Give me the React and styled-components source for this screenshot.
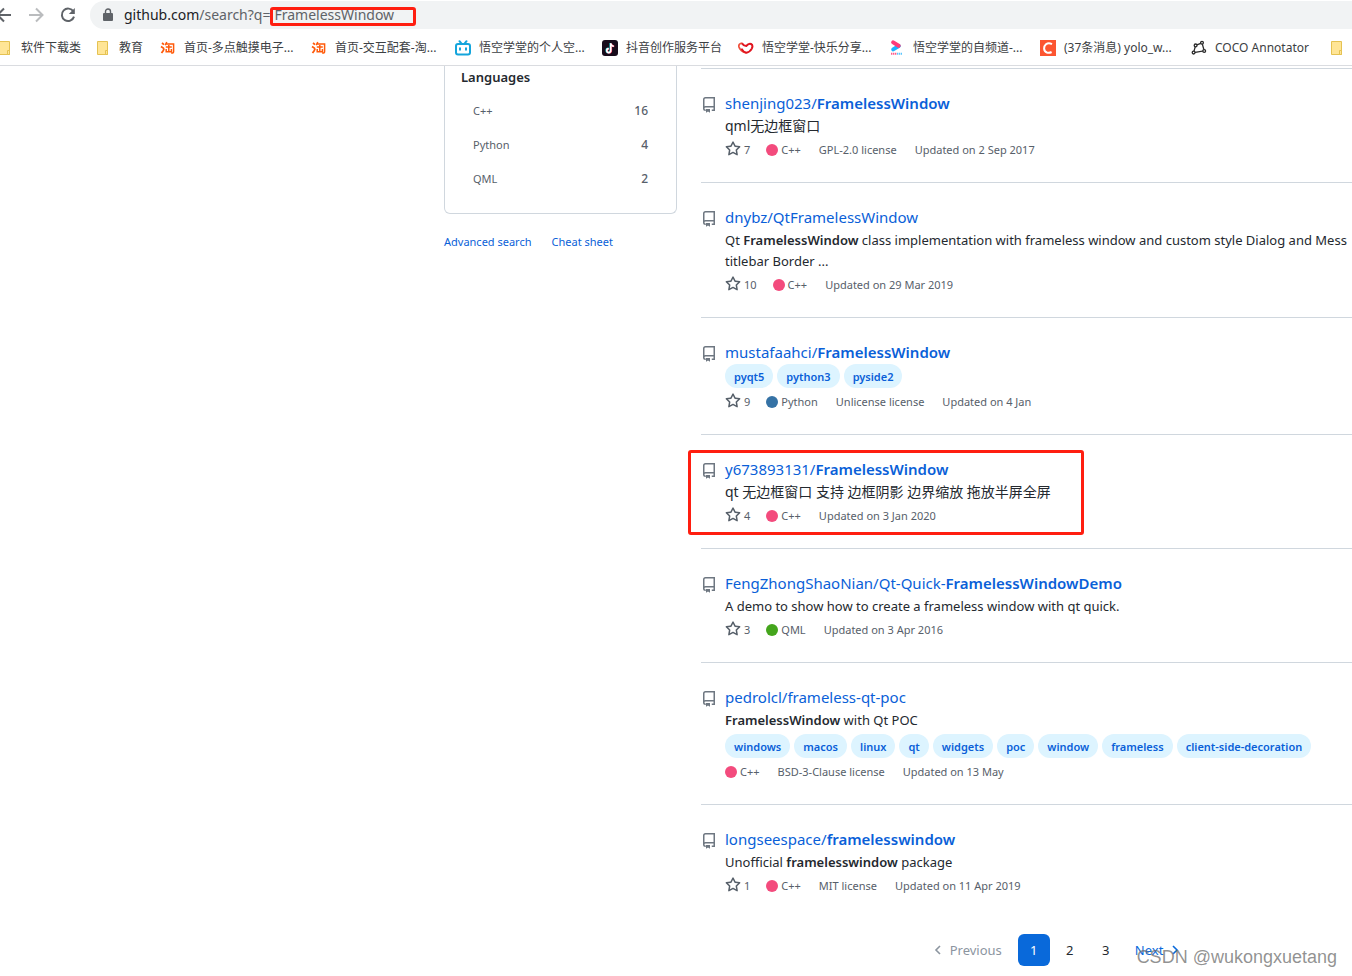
import React from "react";
import styled, { createGlobalStyle } from "styled-components";

const GlobalStyle = createGlobalStyle`
  * {
    box-sizing: border-box;
  }
  body {
    margin: 0;
    overflow: hidden;
    background: #fff;
    color: #24292f;
    font-family: "Noto Sans", "Noto Sans CJK SC", sans-serif;
    font-size: 13px;
    line-height: 21px;
  }
  a {
    color: #0a5fd8;
    text-decoration: none;
  }
`;

const BOOKMARKS = [
  { icon: "folder", label: "软件下载类", width: 98 },
  { icon: "folder", label: "教育", width: 65 },
  { icon: "taobao", label: "首页-多点触摸电子...", width: 151 },
  { icon: "taobao", label: "首页-交互配套-淘...", width: 144 },
  { icon: "bilibili", label: "悟空学堂的个人空...", width: 147 },
  { icon: "douyin", label: "抖音创作服务平台", width: 136 },
  { icon: "xigua", label: "悟空学堂-快乐分享...", width: 151 },
  { icon: "youku", label: "悟空学堂的自频道-...", width: 151 },
  { icon: "csdn", label: "(37条消息) yolo_w...", width: 151 },
  { icon: "coco", label: "COCO Annotator", width: 138 },
  { icon: "folder", label: "", width: 24 },
];

const LANGUAGES = [
  { name: "C++", count: 16 },
  { name: "Python", count: 4 },
  { name: "QML", count: 2 },
];

const COLORS = { "C++": "#f34b7d", Python: "#3572a5", QML: "#44a51c" };

const REPOS = [
  {
    owner: "shenjing023/",
    match: "FramelessWindow",
    description: "qml无边框窗口",
    chinese: true,
    stars: 7,
    language: "C++",
    license: "GPL-2.0 license",
    updated: "2 Sep 2017",
  },
  {
    owner: "dnybz/QtFramelessWindow",
    description: (
      <>
        Qt <b>FramelessWindow</b> class implementation with frameless window and custom style Dialog and Mess
        <br />
        titlebar Border ...
      </>
    ),
    stars: 10,
    language: "C++",
    updated: "29 Mar 2019",
  },
  {
    owner: "mustafaahci/",
    match: "FramelessWindow",
    topics: ["pyqt5", "python3", "pyside2"],
    stars: 9,
    language: "Python",
    license: "Unlicense license",
    updated: "4 Jan",
  },
  {
    owner: "y673893131/",
    match: "FramelessWindow",
    description: "qt 无边框窗口 支持 边框阴影 边界缩放 拖放半屏全屏",
    chinese: true,
    stars: 4,
    language: "C++",
    updated: "3 Jan 2020",
    marked: true,
  },
  {
    owner: "FengZhongShaoNian/Qt-Quick-",
    match: "FramelessWindowDemo",
    description: "A demo to show how to create a frameless window with qt quick.",
    stars: 3,
    language: "QML",
    updated: "3 Apr 2016",
  },
  {
    owner: "pedrolcl/frameless-qt-poc",
    description: (
      <>
        <b>FramelessWindow</b> with Qt POC
      </>
    ),
    topics: ["windows", "macos", "linux", "qt", "widgets", "poc", "window", "frameless", "client-side-decoration"],
    language: "C++",
    license: "BSD-3-Clause license",
    updated: "13 May",
  },
  {
    owner: "longseespace/",
    match: "framelesswindow",
    description: (
      <>
        Unofficial <b>framelesswindow</b> package
      </>
    ),
    stars: 1,
    language: "C++",
    license: "MIT license",
    updated: "11 Apr 2019",
  },
];

function BookmarkIcon({ name }) {
  switch (name) {
    case "folder":
      return (
        <svg width="16" height="16" viewBox="0 0 16 16">
          <path d="M2.5 1.5h10v13h-10z" fill="#ffe596" stroke="#e5c252" />
          <path d="M10.5 10.5h2v4h-2z" fill="#ffe596" stroke="#e5c252" />
        </svg>
      );
    case "taobao":
      return (
        <svg width="16" height="16" viewBox="0 0 16 16" fill="none" stroke="#ff5a0a" strokeWidth="1.8">
          <path d="M2 3l2 1.6M1 6.5l2.4 1.6q1 1-.2 2.6L1.5 13" />
          <path d="M6.8 2L5.2 5.2M6 4h7.6v7.4q0 2-2.4 1.6M5.8 7h6M8.8 5v6.5M6.2 9v2.7h5.2V9" strokeWidth="1.5" />
        </svg>
      );
    case "bilibili":
      return (
        <svg width="16" height="16" viewBox="0 0 16 16" fill="none" stroke="#14a5dc" strokeWidth="2" strokeLinecap="round">
          <rect x="1" y="4" width="14" height="10.5" rx="2" />
          <path d="M4.5 1.2L6.5 3.6M11.5 1.2L9.5 3.6M5 8.3v1.4M11 8.3v1.4" />
        </svg>
      );
    case "douyin":
      return (
        <svg width="16" height="16" viewBox="0 0 16 16" fill="none" strokeWidth="1.6">
          <rect width="16" height="16" rx="3" fill="#170b1a" />
          <path d="M8.3 3v7.4a2 2 0 1 1-2-2M8.3 3.4q.6 2.4 3 2.6" stroke="#25f4ee" />
          <path d="M9.3 3.4v7.4a2 2 0 1 1-2-2M9.3 3.8q.6 2.4 3 2.6" stroke="#fe2c55" />
          <path d="M8.8 3.2v7.4a2 2 0 1 1-2-2M8.8 3.6q.6 2.4 3 2.6" stroke="#fff" />
        </svg>
      );
    case "xigua":
      return (
        <svg width="16" height="16" viewBox="0 0 16 16" fill="none">
          <path d="M4.4 3.2Q.2 3.4 1 7q1.4 4.4 7 6" stroke="#f0503c" strokeWidth="1.8" />
          <path d="M4 3.4q1.8 2.6 4.2 2.6Q10.6 3.2 13 4q2.4 1.2.8 4.6-1.8 3.4-5.4 4.2Q5 11.8 3.4 8.6" stroke="#e0141e" strokeWidth="2" />
        </svg>
      );
    case "youku":
      return (
        <svg width="16" height="16" viewBox="0 0 16 16" fill="none">
          <path d="M9.8 6L4.2 9.4" stroke="#1fb0ff" strokeWidth="4" strokeLinecap="round" />
          <path d="M4.2 2.4l5.4 3.4" stroke="#ff3a78" strokeWidth="4" strokeLinecap="round" />
          <path d="M2 13.8h6" stroke="#ff5c8c" strokeWidth="2" strokeDasharray="1.4 .6" />
          <path d="M8 13.8h5" stroke="#59c6ff" strokeWidth="2" strokeDasharray="1.4 .6" />
        </svg>
      );
    case "csdn":
      return (
        <svg width="16" height="16" viewBox="0 0 16 16" fill="none">
          <path d="M0 0h16v16H0z" fill="#fc5531" />
          <path d="M12 4.2Q8.6 2.4 6 4.3 4 6 4.1 8.6q.3 3 2.8 3.9 2.4.7 4.7-.5" stroke="#fff" strokeWidth="2" />
        </svg>
      );
    default:
      return (
        <svg width="16" height="16" viewBox="0 0 16 16" fill="#fff" stroke="#2b2b2b" strokeWidth="1.3">
          <path d="M4.6 5.4L11 2.8l2.2 8L2.6 12.6z" />
          <circle cx="4.6" cy="5.4" r="1.4" />
          <circle cx="11" cy="2.8" r="1.4" />
          <circle cx="13.2" cy="11" r="1.4" />
          <circle cx="2.6" cy="12.6" r="1.4" />
        </svg>
      );
  }
}

function Repo({ owner, match, description, chinese, topics, stars, language, license, updated, marked }) {
  return (
    <RepoItem>
      <RepoIcon viewBox="0 0 16 16" aria-hidden="true">
        <path
          d="M4.5.75h8.75v12.5h-2.5M4.75 13.25H4.5a1.75 1.75 0 0 1-1.75-1.75v-9A1.75 1.75 0 0 1 4.5.75M2.75 11.5A1.75 1.75 0 0 1 4.5 9.75h8.75"
          fill="none"
          stroke="#6e7781"
          strokeWidth="1.5"
        />
        <path d="M5 12h4v3.75l-2-1.3-2 1.3z" />
      </RepoIcon>
      <div>
        <RepoTitle>
          <a href="#repo">
            {owner}
            {match && <b>{match}</b>}
          </a>
        </RepoTitle>
        {description && <Description $chinese={chinese}>{description}</Description>}
        {topics && (
          <Topics>
            {topics.map((topic) => (
              <Topic key={topic} href="#topic">
                {topic}
              </Topic>
            ))}
          </Topics>
        )}
        <Meta>
          {stars && (
            <Stars href="#stars">
              <svg width="16" height="16" viewBox="0 0 16 16" aria-hidden="true">
                <path d="M8 .25a.75.75 0 01.673.418l1.882 3.815 4.21.612a.75.75 0 01.416 1.279l-3.046 2.97.719 4.192a.75.75 0 01-1.088.791L8 12.347l-3.766 1.98a.75.75 0 01-1.088-.79l.72-4.194L.818 6.374a.75.75 0 01.416-1.28l4.21-.611L7.327.668A.75.75 0 018 .25zm0 2.445L6.615 5.5a.75.75 0 01-.564.41l-3.097.45 2.24 2.184a.75.75 0 01.216.664l-.528 3.084 2.769-1.456a.75.75 0 01.698 0l2.77 1.456-.53-3.084a.75.75 0 01.216-.664l2.24-2.183-3.096-.45a.75.75 0 01-.564-.41L8 2.694z" />
              </svg>
              {stars}
            </Stars>
          )}
          <Language>
            <Dot $color={COLORS[language]} />
            {language}
          </Language>
          {license && <span>{license}</span>}
          <span>Updated on {updated}</span>
        </Meta>
      </div>
      {marked && <RepoMark />}
    </RepoItem>
  );
}

function App() {
  return (
    <Page>
      <GlobalStyle />
      <Toolbar>
        <ToolButton aria-label="Back">
          <svg width="16" height="16" viewBox="0 0 16 16" stroke="#5f6368">
            <path d="M15 8H2M8 1.5L1.5 8 8 14.5" />
          </svg>
        </ToolButton>
        <ToolButton aria-label="Forward">
          <svg width="16" height="16" viewBox="0 0 16 16" stroke="#babcbe">
            <path d="M1 8h13M8 1.5L14.5 8 8 14.5" />
          </svg>
        </ToolButton>
        <ToolButton aria-label="Reload">
          <svg width="16" height="16" viewBox="0 0 16 16" stroke="#5f6368">
            <path d="M13.4 4.6A6.2 6.2 0 1 0 14 9.6" />
            <path d="M14.8 1v6H8.8z" fill="#5f6368" stroke="none" />
          </svg>
        </ToolButton>
        <AddressBar>
          <svg width="10" height="14" viewBox="0 0 10 14" aria-hidden="true">
            <path d="M2.5 6V3.5a2.5 2.5 0 0 1 5 0V6" fill="none" stroke="#5f6368" strokeWidth="1.4" />
            <rect y="5" width="10" height="8" rx="1" fill="#5f6368" />
          </svg>
          <Url>
            <span>github.com</span>/search?q=
            <Query>
              FramelessWindow
              <QueryMark />
            </Query>
          </Url>
        </AddressBar>
      </Toolbar>
      <BookmarkBar>
        {BOOKMARKS.map(({ icon, label, width }, index) => (
          <Bookmark key={index} href="#bookmark" $width={width} aria-label={label || "Folder"}>
            <BookmarkIcon name={icon} />
            {label}
          </Bookmark>
        ))}
      </BookmarkBar>
      <Content>
        <Sidebar>
          <LanguageCard>
            <h2>Languages</h2>
            <ul>
              {LANGUAGES.map(({ name, count }) => (
                <li key={name}>
                  <LanguageLink href="#language">
                    {name}
                    <b>{count}</b>
                  </LanguageLink>
                </li>
              ))}
            </ul>
          </LanguageCard>
          <SidebarLinks>
            <a href="#advanced">Advanced search</a>
            <a href="#cheat">Cheat sheet</a>
          </SidebarLinks>
        </Sidebar>
        <Results>
          <RepoList>
            {REPOS.map((repo) => (
              <Repo key={repo.owner} {...repo} />
            ))}
          </RepoList>
          <Pagination>
            <PageStep $disabled>
              <svg width="16" height="16" viewBox="0 0 16 16">
                <path d="M10 4L6 8l4 4" />
              </svg>
              Previous
            </PageStep>
            <PageNumber href="#1" $current>
              1
            </PageNumber>
            <PageNumber href="#2">2</PageNumber>
            <PageNumber href="#3">3</PageNumber>
            <PageStep as="a" href="#next">
              Next
              <svg width="16" height="16" viewBox="0 0 16 16">
                <path d="M6 4l4 4-4 4" />
              </svg>
            </PageStep>
          </Pagination>
        </Results>
      </Content>
      <Watermark>CSDN @wukongxuetang</Watermark>
    </Page>
  );
}

const Page = styled.div`
  position: relative;
  min-height: 100vh;
  overflow: hidden;
`;

const Toolbar = styled.div`
  display: flex;
  align-items: center;
  gap: 16px;
  height: 30px;
  margin-left: -4px;
`;

const ToolButton = styled.button`
  display: flex;
  padding: 0;
  border: 0;
  background: none;

  & svg {
    fill: none;
    stroke-width: 2;
  }
`;

const AddressBar = styled.div`
  flex: 1;
  display: flex;
  align-items: center;
  gap: 11px;
  height: 28px;
  margin-left: -2px;
  padding-left: 13px;
  border-radius: 14px 0 0 14px;
  background: #f1f3f4;
`;

const Url = styled.div`
  padding-bottom: 2px;
  color: #5f6368;
  font-size: 14px;
  white-space: nowrap;

  & > span:first-child {
    color: #202124;
  }
`;

const Query = styled.span`
  position: relative;
  margin-left: 4px;
`;

const RedMark = styled.span`
  position: absolute;
  border: 3px solid #ff1e10;
  border-radius: 3px;
  pointer-events: none;
`;

const QueryMark = styled(RedMark)`
  top: 2px;
  left: -4px;
  right: -22px;
  height: 19px;
`;

const BookmarkBar = styled.nav`
  display: flex;
  align-items: center;
  height: 36px;
  margin-left: -3px;
  border-bottom: 1px solid #dadce0;
`;

const Bookmark = styled.a`
  flex: none;
  display: flex;
  align-items: center;
  gap: 8px;
  width: ${(props) => props.$width}px;
  color: #3c4043;
  font-size: 12px;
  white-space: nowrap;

  & svg {
    flex: none;
  }
`;

const Content = styled.div`
  display: flex;
  gap: 24px;
  margin: 0 -63px 0 444px;
`;

const Sidebar = styled.aside`
  flex: none;
  width: 233px;
`;

const LanguageCard = styled.section`
  padding: 0 16px 17px;
  border: 1px solid #d0d7de;
  border-top: 0;
  border-radius: 0 0 6px 6px;

  & h2 {
    margin: 0 0 6px;
    font-size: 13px;
    font-weight: 600;
    line-height: 22px;
  }
  & ul {
    margin: 0;
    padding: 0;
    list-style: none;
  }
`;

const LanguageLink = styled.a`
  display: flex;
  justify-content: space-between;
  padding: 0 12px;
  color: #57606a;
  font-size: 11px;
  line-height: 34px;

  & b {
    font-size: 12px;
    font-weight: 500;
  }
`;

const SidebarLinks = styled.div`
  display: flex;
  gap: 20px;
  margin-top: 17px;
  font-size: 11px;
`;

const Results = styled.main`
  flex: 1;
  min-width: 0;
  padding-top: 2px;
`;

const RepoList = styled.ul`
  margin: 0;
  padding: 0;
  list-style: none;

  & b {
    font-weight: 600;
  }
`;

const RepoItem = styled.li`
  position: relative;
  display: flex;
  gap: 8px;
  padding: 24px 0 23px;
  border-top: 1px solid #d0d7de;
`;

const RepoIcon = styled.svg`
  flex: none;
  width: 16px;
  height: 16px;
  margin-top: 4px;
  fill: #6e7781;
`;

const RepoTitle = styled.div`
  margin-bottom: 3px;
  font-size: 15px;
  line-height: 20px;
`;

const Description = styled.p`
  margin: 0 0 ${(props) => (props.$chinese ? 6 : 4)}px;
  font-size: ${(props) => (props.$chinese ? 14 : 13)}px;
  line-height: ${(props) => (props.$chinese ? 19 : 21)}px;
  white-space: nowrap;
`;

const Topics = styled.div`
  display: flex;
  gap: 4px;
  margin: -1px 0 5px;
`;

const Topic = styled.a`
  padding: 1px 9px 0;
  border-radius: 12px;
  background: #ddf4ff;
  font-size: 11px;
  font-weight: 600;
  line-height: 23px;
`;

const Meta = styled.div`
  display: flex;
  gap: 18px;
  color: #57606a;
  font-size: 11px;
  line-height: 18px;
`;

const Stars = styled.a`
  display: flex;
  gap: 3px;
  margin-right: -2px;
  color: #57606a;

  & svg {
    fill: #57606a;
  }
`;

const Language = styled.span`
  display: flex;
  align-items: center;
  gap: 3px;
`;

const Dot = styled.span`
  width: 12px;
  height: 12px;
  border-radius: 50%;
  background: ${(props) => props.$color};
`;

const RepoMark = styled(RedMark)`
  top: 15px;
  left: -13px;
  width: 396px;
  height: 85px;
`;

const Pagination = styled.nav`
  display: flex;
  justify-content: center;
  gap: 4px;
  margin-top: 16px;
`;

const PageStep = styled.span`
  display: flex;
  align-items: center;
  gap: 4px;
  padding: 0 12px 0 9px;
  color: ${(props) => (props.$disabled ? "#8c959f" : "#0969da")};
  line-height: 32px;

  & svg {
    fill: none;
    stroke: currentColor;
    stroke-width: 1.6;
  }
`;

const PageNumber = styled.a`
  width: 32px;
  border-radius: 6px;
  background: ${(props) => (props.$current ? "#0969da" : "none")};
  color: ${(props) => (props.$current ? "#fff" : "#24292f")};
  line-height: 32px;
  text-align: center;
`;

const Watermark = styled.div`
  position: absolute;
  right: 15px;
  bottom: 7px;
  color: rgba(110, 110, 110, 0.75);
  font-family: "Liberation Sans", sans-serif;
  font-size: 18px;
  line-height: 24px;
`;

export default App;
